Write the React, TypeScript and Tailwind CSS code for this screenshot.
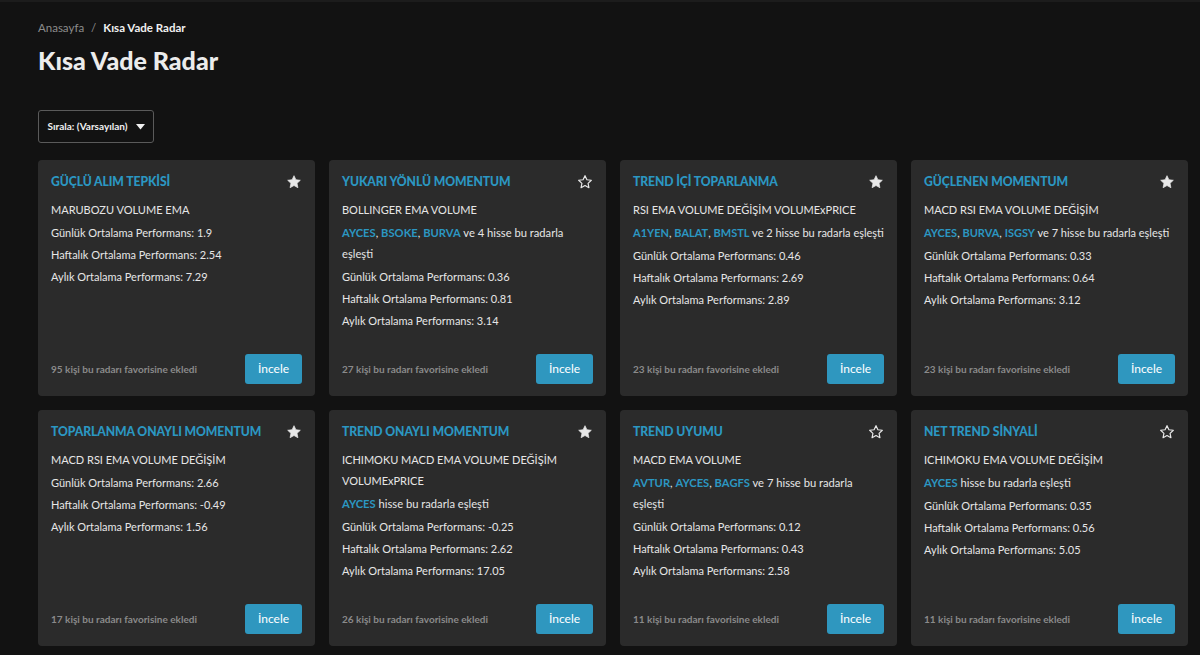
import { ReactElement } from 'react';

type Radar = {
  title: string;
  indicators: string;
  matches?: string[];
  more?: number;
  oneLine?: boolean;
  daily: string;
  weekly: string;
  monthly: string;
  favs: number;
  starred: boolean;
};

const radars: Radar[] = [
  { title: 'GÜÇLÜ ALIM TEPKİSİ', indicators: 'MARUBOZU VOLUME EMA', daily: '1.9', weekly: '2.54', monthly: '7.29', favs: 95, starred: true },
  { title: 'YUKARI YÖNLÜ MOMENTUM', indicators: 'BOLLINGER EMA VOLUME', matches: ['AYCES', 'BSOKE', 'BURVA'], more: 4, daily: '0.36', weekly: '0.81', monthly: '3.14', favs: 27, starred: false },
  { title: 'TREND İÇİ TOPARLANMA', indicators: 'RSI EMA VOLUME DEĞİŞİM VOLUMExPRICE', matches: ['A1YEN', 'BALAT', 'BMSTL'], more: 2, oneLine: true, daily: '0.46', weekly: '2.69', monthly: '2.89', favs: 23, starred: true },
  { title: 'GÜÇLENEN MOMENTUM', indicators: 'MACD RSI EMA VOLUME DEĞİŞİM', matches: ['AYCES', 'BURVA', 'ISGSY'], more: 7, oneLine: true, daily: '0.33', weekly: '0.64', monthly: '3.12', favs: 23, starred: true },
  { title: 'TOPARLANMA ONAYLI MOMENTUM', indicators: 'MACD RSI EMA VOLUME DEĞİŞİM', daily: '2.66', weekly: '-0.49', monthly: '1.56', favs: 17, starred: true },
  { title: 'TREND ONAYLI MOMENTUM', indicators: 'ICHIMOKU MACD EMA VOLUME DEĞİŞİM VOLUMExPRICE', matches: ['AYCES'], daily: '-0.25', weekly: '2.62', monthly: '17.05', favs: 26, starred: true },
  { title: 'TREND UYUMU', indicators: 'MACD EMA VOLUME', matches: ['AVTUR', 'AYCES', 'BAGFS'], more: 7, daily: '0.12', weekly: '0.43', monthly: '2.58', favs: 11, starred: false },
  { title: 'NET TREND SİNYALİ', indicators: 'ICHIMOKU EMA VOLUME DEĞİŞİM', matches: ['AYCES'], daily: '0.35', weekly: '0.56', monthly: '5.05', favs: 11, starred: false },
];

function Star({ filled }: { filled: boolean }): ReactElement {
  return (
    <svg width="16" height="16" viewBox="0 0 24 24" className="shrink-0">
      <path
        d="M12 2.5l2.9 6.1 6.6.8-4.9 4.6 1.3 6.6L12 17.3l-5.9 3.3 1.3-6.6-4.9-4.6 6.6-.8z"
        fill={filled ? '#e8e8e8' : 'none'}
        stroke="#e8e8e8"
        strokeWidth={filled ? 1 : 1.8}
        strokeLinejoin="round"
      />
    </svg>
  );
}

function RadarCard({ r }: { r: Radar }): ReactElement {
  return (
    <div className="flex h-[236px] flex-col rounded-[4px] bg-[#2b2b2b] px-[13px] pt-[11px] pb-[12px]">
      <div className="flex items-start justify-between">
        <h3 className="text-[12.2px] leading-[22px] font-black tracking-[-0.1px] text-[#2b97c2]">{r.title}</h3>
        <div className="mt-[3px]">
          <Star filled={r.starred} />
        </div>
      </div>
      <div className="mt-[6px] text-[11px] leading-[21px] text-[#e6e6e6]">
        <p>{r.indicators}</p>
        {r.matches && (
          <p className={r.oneLine ? 'mt-[2px] whitespace-nowrap' : 'mt-[2px] text-[11.2px]'}>
            {r.matches.map((m, i) => (
              <span key={m}>
                <span className="font-bold text-[#2b97c2]">{m}</span>
                {i < r.matches!.length - 1 ? ', ' : ''}
              </span>
            ))}{' '}
            {r.more ? `ve ${r.more} hisse bu radarla eşleşti` : 'hisse bu radarla eşleşti'}
          </p>
        )}
        <p className="mt-[2px]">Günlük Ortalama Performans: {r.daily}</p>
        <p className="mt-[1px]">Haftalık Ortalama Performans: {r.weekly}</p>
        <p className="mt-[1px]">Aylık Ortalama Performans: {r.monthly}</p>
      </div>
      <div className="mt-auto flex items-center justify-between">
        <span className="text-[10px] font-bold text-[#8a8a8a]">
          {r.favs} kişi bu radarı favorisine ekledi
        </span>
        <button className="h-[30px] w-[57px] rounded-[3px] bg-[#2f97bf] text-[12px] text-white">
          İncele
        </button>
      </div>
    </div>
  );
}

export default function App(): ReactElement {
  return (
    <div
      className="min-h-[655px] w-full border-t-2 border-[#1c1c1c] bg-[#121212] pl-[38px] text-white"
      style={{ fontFamily: 'Lato, "Open Sans", sans-serif' }}
    >
      <nav className="flex items-center gap-[7px] pt-[17px] text-[11.5px]">
        <span className="text-[#8c8c8c]">Anasayfa</span>
        <span className="text-[#8c8c8c]">/</span>
        <span className="font-bold text-[#f0f0f0]">Kısa Vade Radar</span>
      </nav>
      <h1 className="mt-[8px] text-[25px] leading-[32px] font-black text-[#ececec]">Kısa Vade Radar</h1>
      <button className="mt-[34px] flex h-[33px] w-[116px] items-center justify-center gap-[8px] rounded-[3px] border border-[#5a5a5a] text-[10px] font-bold text-[#f0f0f0]">
        Sırala: (Varsayılan)
        <svg width="9" height="6" viewBox="0 0 9 6">
          <path d="M0 0h9L4.5 5.5z" fill="#f0f0f0" />
        </svg>
      </button>
      <div className="mt-[17px] grid w-[1150px] grid-cols-[repeat(4,277px)] gap-x-[14px] gap-y-[14px] pb-[10px]">
        {radars.map((r) => (
          <RadarCard key={r.title} r={r} />
        ))}
      </div>
    </div>
  );
}
